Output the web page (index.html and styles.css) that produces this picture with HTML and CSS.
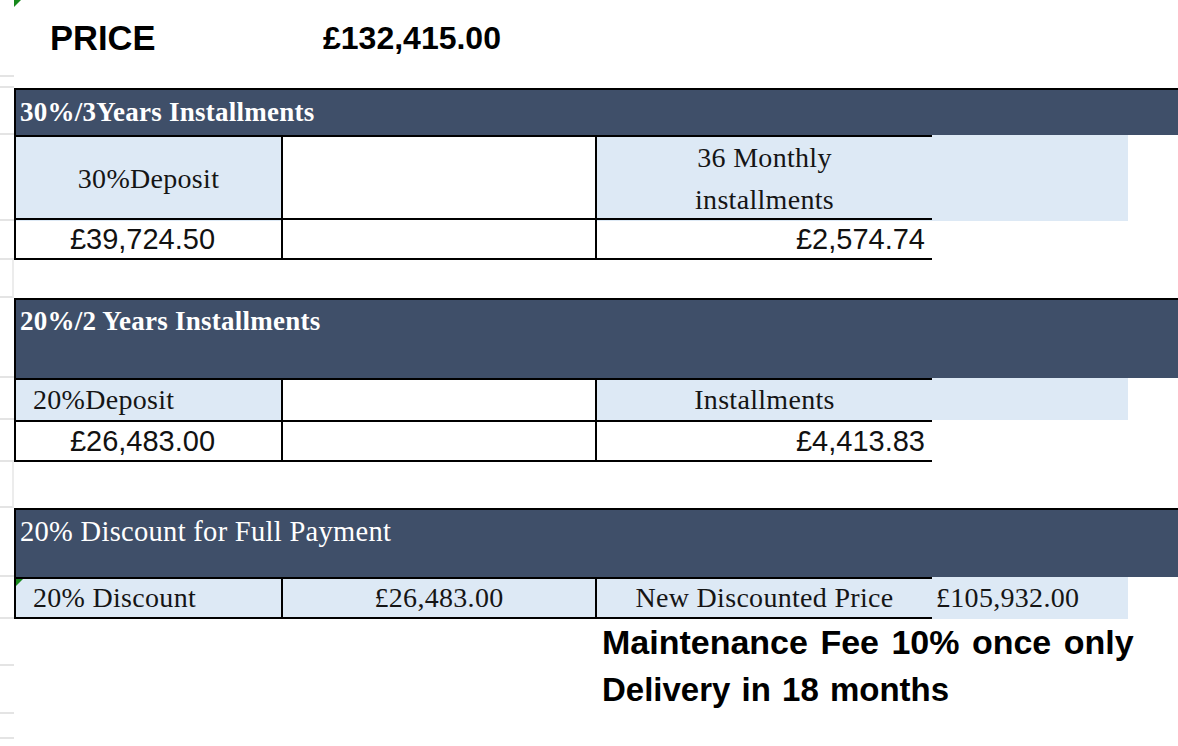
FILE: index.html
```html
<!DOCTYPE html>
<html lang="en">
<head>
<meta charset="utf-8">
<title>Price sheet</title>
<link rel="stylesheet" href="styles.css">
</head>
<body>
<div class="sheet">
  <div class="row h-price">
    <div class="g"></div>
    <div class="c mark price-label">PRICE</div>
    <div class="c price-value">£132,415.00</div>
  </div>
  <div class="row h-gap1"><div class="g"></div></div>

  <div class="row h-hdr1">
    <div class="g"></div>
    <div class="hdr hdr-bold hdr-mid">30%/3Years Installments</div>
  </div>
  <div class="row h-lab1">
    <div class="g"></div>
    <div class="c bt bl blue serif center">30%Deposit</div>
    <div class="c bt bl"></div>
    <div class="c bt bl blue serif center two-line">36 Monthly<br>installments</div>
    <div class="c blue"></div>
  </div>
  <div class="row h-val">
    <div class="g"></div>
    <div class="c bt bl bb num center-l">£39,724.50</div>
    <div class="c bt bl bb"></div>
    <div class="c bt bl bb num right">£2,574.74</div>
  </div>
  <div class="row h-gap2"><div class="g gv"></div></div>

  <div class="row h-hdr2">
    <div class="g"></div>
    <div class="hdr hdr-bold hdr-top">20%/2 Years Installments</div>
  </div>
  <div class="row h-val">
    <div class="g"></div>
    <div class="c bt bl blue serif indent">20%Deposit</div>
    <div class="c bt bl"></div>
    <div class="c bt bl blue serif center">Installments</div>
    <div class="c blue"></div>
  </div>
  <div class="row h-val">
    <div class="g"></div>
    <div class="c bt bl bb num center-l">£26,483.00</div>
    <div class="c bt bl bb"></div>
    <div class="c bt bl bb num right">£4,413.83</div>
  </div>
  <div class="row h-gap3"><div class="g gv"></div></div>

  <div class="row h-hdr3">
    <div class="g"></div>
    <div class="hdr hdr-reg hdr-top">20% Discount for Full Payment</div>
  </div>
  <div class="row h-val">
    <div class="g"></div>
    <div class="c bt bl bb blue serif indent mark">20% Discount</div>
    <div class="c bt bl bb blue serif center">£26,483.00</div>
    <div class="c bt bl bb blue serif center">New Discounted Price</div>
    <div class="c blue serif lead">£105,932.00</div>
  </div>
  <div class="row h-note1">
    <div class="g"></div>
    <div class="c"></div>
    <div class="c"></div>
    <div class="note note-wide">Maintenance Fee 10% once only</div>
  </div>
  <div class="row h-note2">
    <div class="g"></div>
    <div class="c"></div>
    <div class="c"></div>
    <div class="note">Delivery in 18 months</div>
  </div>
  <div class="row h-tail1"><div class="g"></div></div>
  <div class="row h-tail2"><div class="g nob"></div></div>
</div>
</body>
</html>
```

FILE: styles.css
```css
html, body {
  margin: 0;
  padding: 0;
  background: #ffffff;
}

body {
  width: 1178px;
  height: 746px;
  overflow: hidden;
  font-family: "Liberation Sans", Arial, sans-serif;
  color: #111111;
}

.sheet {
  display: flex;
  flex-direction: column;
}

.row {
  display: grid;
  grid-template-columns: 14px 267px 314px 337px 196px 50px;
}

.h-price { height: 77px; }
.h-gap1 { height: 11px; }
.h-hdr1 { height: 47px; }
.h-lab1 { height: 83px; }
.h-val { height: 42px; }
.h-gap2 { height: 38px; }
.h-hdr2 { height: 80px; }
.h-gap3 { height: 46px; }
.h-hdr3 { height: 69px; }
.h-note1 { height: 47px; }
.h-note2 { height: 48px; }
.h-tail1 { height: 25px; }
.h-tail2 { height: 7px; }

/* row-header gutter with grid stubs */
.g {
  box-sizing: border-box;
  border-bottom: 2px solid #e4e4e4;
}
.g.gv {
  border-right: 2px solid #ececec;
}
.g.nob {
  border-bottom: 0;
}

.c {
  box-sizing: border-box;
  display: flex;
  align-items: center;
  min-width: 0;
  white-space: nowrap;
}

.bt { border-top: 2px solid #000; }
.bl { border-left: 2px solid #000; }
.bb { border-bottom: 2px solid #000; }

.blue { background: #dde9f5; }

.serif {
  font-family: "Liberation Serif", "Times New Roman", serif;
  font-size: 28px;
  letter-spacing: 0.3px;
  color: #151515;
}

.num {
  font-family: "Liberation Sans", Arial, sans-serif;
  font-size: 29px;
  color: #111;
}

.center { justify-content: center; }
.center-l { justify-content: center; padding-right: 12px; }
.right { justify-content: flex-end; padding-right: 7px; }
.indent { padding-left: 17px; }
.lead { padding-left: 4px; }

.two-line {
  text-align: center;
  line-height: 42px;
}

/* section headers */
.hdr {
  grid-column: 2 / -1;
  box-sizing: border-box;
  display: flex;
  background: #3f4f69;
  color: #ffffff;
  border-top: 2px solid #000;
  border-left: 2px solid #000;
  padding-left: 4px;
  font-family: "Liberation Serif", "Times New Roman", serif;
  white-space: nowrap;
}
.hdr-bold {
  font-weight: bold;
  font-size: 27px;
  letter-spacing: 0.25px;
}
.hdr-reg {
  font-size: 28.5px;
  letter-spacing: 0.3px;
}
.hdr-mid { align-items: center; }
.hdr-top { align-items: flex-start; padding-top: 6px; }

/* top price line */
.price-label {
  padding-left: 36px;
  font-weight: bold;
  font-size: 34.5px;
  color: #000;
}
.price-value {
  padding-left: 42px;
  font-weight: bold;
  font-size: 32px;
  color: #000;
}

/* notes under the tables */
.note {
  grid-column: 4 / -1;
  display: flex;
  align-items: center;
  padding-left: 7px;
  font-weight: bold;
  font-size: 33px;
  word-spacing: 2px;
  color: #000;
  white-space: nowrap;
}
.note-wide {
  font-size: 34px;
  word-spacing: 3px;
}

/* green comment markers */
.mark {
  position: relative;
}
.mark::before {
  content: "";
  position: absolute;
  left: 0;
  top: 0;
  width: 0;
  height: 0;
  border-top: 7px solid #17891c;
  border-right: 7px solid transparent;
}
```
